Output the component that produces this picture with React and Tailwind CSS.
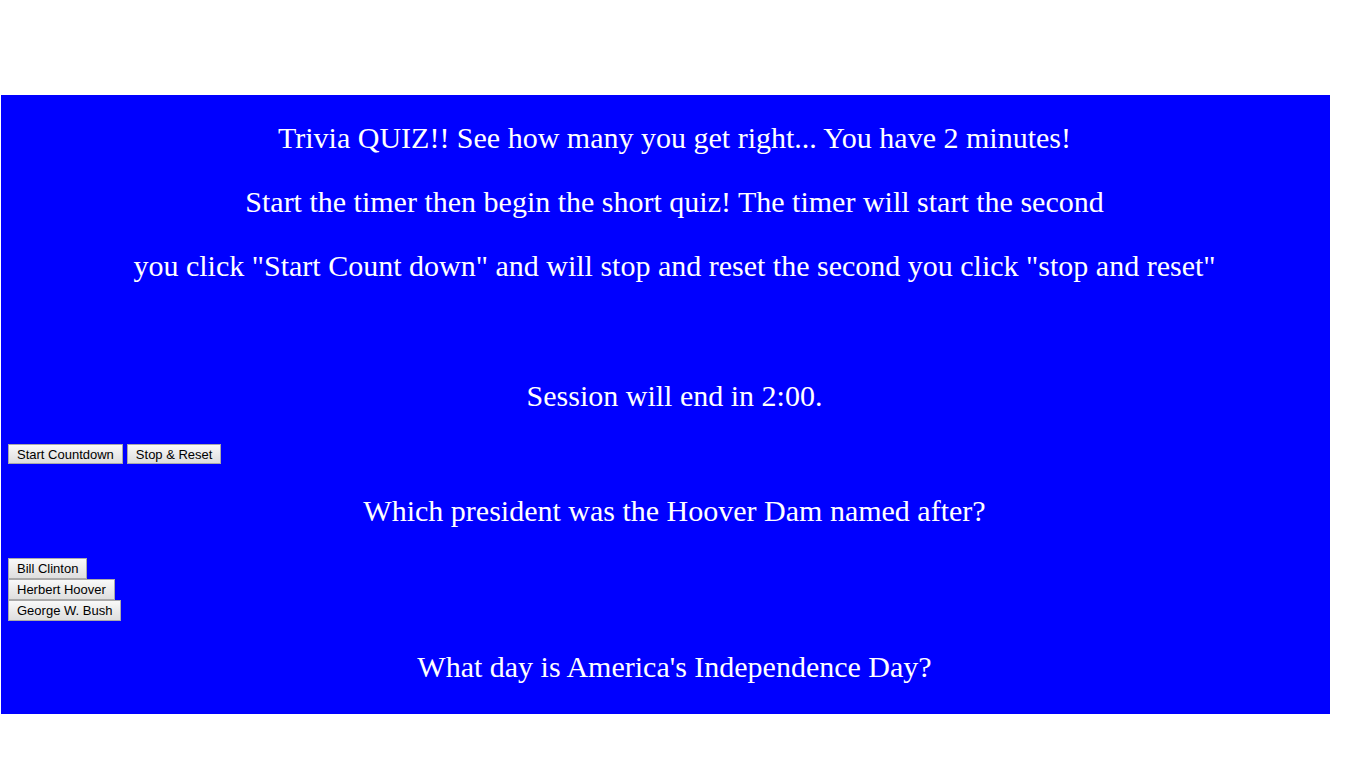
export default function App() {
  const serif = "font-['Liberation_Serif','Times_New_Roman',serif]";
  const btn =
    "px-[8px] border border-[#a9a9a9] bg-gradient-to-b from-[#f9f9f9] to-[#dedede] text-[13px] text-black font-['Liberation_Sans',Arial,sans-serif] leading-none";
  const line = "w-[1333px] text-center text-[30px] leading-[32px]";

  return (
    <div className="min-h-screen bg-white pt-[95px]">
      <div className={`ml-[1px] w-[1329px] h-[619px] overflow-hidden bg-[#0000ff] text-white ${serif} px-[7px]`}>
        <p className={`mt-[27px] ${line}`}>
          Trivia QUIZ!! See how many you get right... You have 2 minutes!
        </p>
        <p className={`mt-[32px] ${line}`}>
          Start the timer then begin the short quiz! The timer will start the second
        </p>
        <p className={`mt-[32px] ${line}`}>
          you click "Start Count down" and will stop and reset the second you click "stop and reset"
        </p>
        <p className={`mt-[98px] ${line}`}>Session will end in 2:00.</p>
        <div className="mt-[32px] flex gap-[4px]">
          <button className={`h-[20px] ${btn}`}>Start Countdown</button>
          <button className={`h-[20px] ${btn}`}>Stop &amp; Reset</button>
        </div>
        <p className={`mt-[31px] ${line}`}>
          Which president was the Hoover Dam named after?
        </p>
        <div className="mt-[31px] flex flex-col items-start">
          <button className={`h-[21px] ${btn}`}>Bill Clinton</button>
          <button className={`h-[21px] ${btn}`}>Herbert Hoover</button>
          <button className={`h-[21px] ${btn}`}>George W. Bush</button>
        </div>
        <p className={`mt-[30px] ${line}`}>
          What day is America's Independence Day?
        </p>
      </div>
    </div>
  );
}
